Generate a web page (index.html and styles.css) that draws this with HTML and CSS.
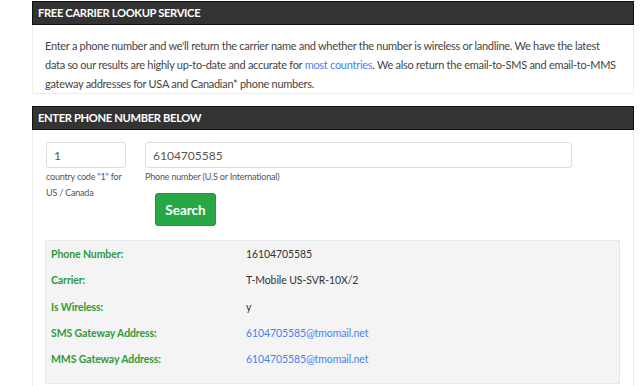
FILE: index.html
```html
<!DOCTYPE html>
<html lang="en">
<head>
    <meta charset="UTF-8">
    <meta name="viewport" content="width=device-width, initial-scale=1.0">
    <title>Free Carrier Lookup</title>
    <link rel="stylesheet" href="styles.css">
</head>
<body>
    <div class="page">
        <!-- Intro panel -->
        <div class="panel">
            <div class="panel-head">FREE CARRIER LOOKUP SERVICE</div>
            <div class="panel-body intro">
                <p>Enter a phone number and we'll return the carrier name and whether the number is wireless or landline. We have the latest data so our results are highly up-to-date and accurate for <a href="#">most countries</a>. We also return the email-to-SMS and email-to-MMS gateway addresses for USA and Canadian* phone numbers.</p>
            </div>
        </div>

        <!-- Lookup form -->
        <div class="panel lookup">
            <div class="panel-head">ENTER PHONE NUMBER BELOW</div>
            <div class="panel-body">
                <form class="lookup-form">
                    <div class="field cc">
                        <input type="text" value="1">
                        <span class="hint">country code "1" for US / Canada</span>
                    </div>
                    <div class="field phone">
                        <input type="text" value="6104705585">
                        <span class="hint">Phone number (U.S or International)</span>
                        <button type="button" class="search-btn">Search</button>
                    </div>
                </form>

                <div class="results">
                    <div class="label">Phone Number:</div>
                    <div class="value">16104705585</div>
                    <div class="label">Carrier:</div>
                    <div class="value">T-Mobile US-SVR-10X/2</div>
                    <div class="label">Is Wireless:</div>
                    <div class="value">y</div>
                    <div class="label">SMS Gateway Address:</div>
                    <div class="value"><a href="#">6104705585@tmomail.net</a></div>
                    <div class="label">MMS Gateway Address:</div>
                    <div class="value"><a href="#">6104705585@tmomail.net</a></div>
                </div>
            </div>
        </div>
    </div>
</body>
</html>
```

FILE: styles.css
```css
body {
    font-family: Lato, "Liberation Sans", sans-serif;
    background-color: #fff;
    color: #333;
    margin: 0;
    overflow: hidden;
}

a {
    color: #4b7ff0;
    text-decoration: none;
}

.page {
    width: 602px;
    margin: 1px 0 0 32px;
}

/* Panels */
.panel {
    border: 1px solid #eee;
    border-top: none;
    background-color: #fff;
}

.panel-head {
    background-color: #333;
    color: #fff;
    border: 1px solid #111;
    margin: 0 -1px;
    height: 22px;
    line-height: 22px;
    padding: 0 5px;
    font-size: 11.2px;
    font-weight: bold;
    letter-spacing: -0.35px;
}

.panel-body {
    padding: 11px 12px 0;
}

.intro p {
    margin: 0;
    font-size: 11px;
    line-height: 19px;
    color: #444;
    letter-spacing: -0.28px;
}

.lookup {
    margin-top: 12px;
    height: 300px;
}

/* Form */
.lookup-form {
    display: flex;
    gap: 19px;
    padding: 1px 0 0 1px;
}

.field {
    display: flex;
    flex-direction: column;
}

.field input {
    height: 26px;
    box-sizing: border-box;
    border: 1px solid #ddd;
    border-radius: 3px;
    padding: 0 7px;
    font-family: inherit;
    font-size: 12px;
    color: #555;
}

.cc {
    width: 80px;
}

.phone {
    width: 427px;
}

.hint {
    font-size: 9px;
    color: #555;
    line-height: 16px;
    margin-top: 1px;
    letter-spacing: -0.2px;
}

.search-btn {
    align-self: flex-start;
    margin: 8px 0 0 10px;
    width: 61px;
    height: 33px;
    background-color: #28a745;
    border: 1px solid #1f9a3a;
    border-radius: 3px;
    color: #fff;
    font-family: inherit;
    font-size: 13.5px;
    font-weight: bold;
    padding: 0;
}

/* Results */
.results {
    display: grid;
    grid-template-columns: 195px 1fr;
    grid-auto-rows: 26.3px;
    align-items: center;
    width: 575px;
    box-sizing: border-box;
    margin: 14px 0 0 0;
    padding: 0 5px 11px;
    background-color: #f4f4f4;
    border: 1px solid #e6e6e6;
    font-size: 10.5px;
    letter-spacing: -0.1px;
}

.label {
    color: #2f9a3a;
    font-weight: bold;
}

.value {
    color: #333;
}
```
